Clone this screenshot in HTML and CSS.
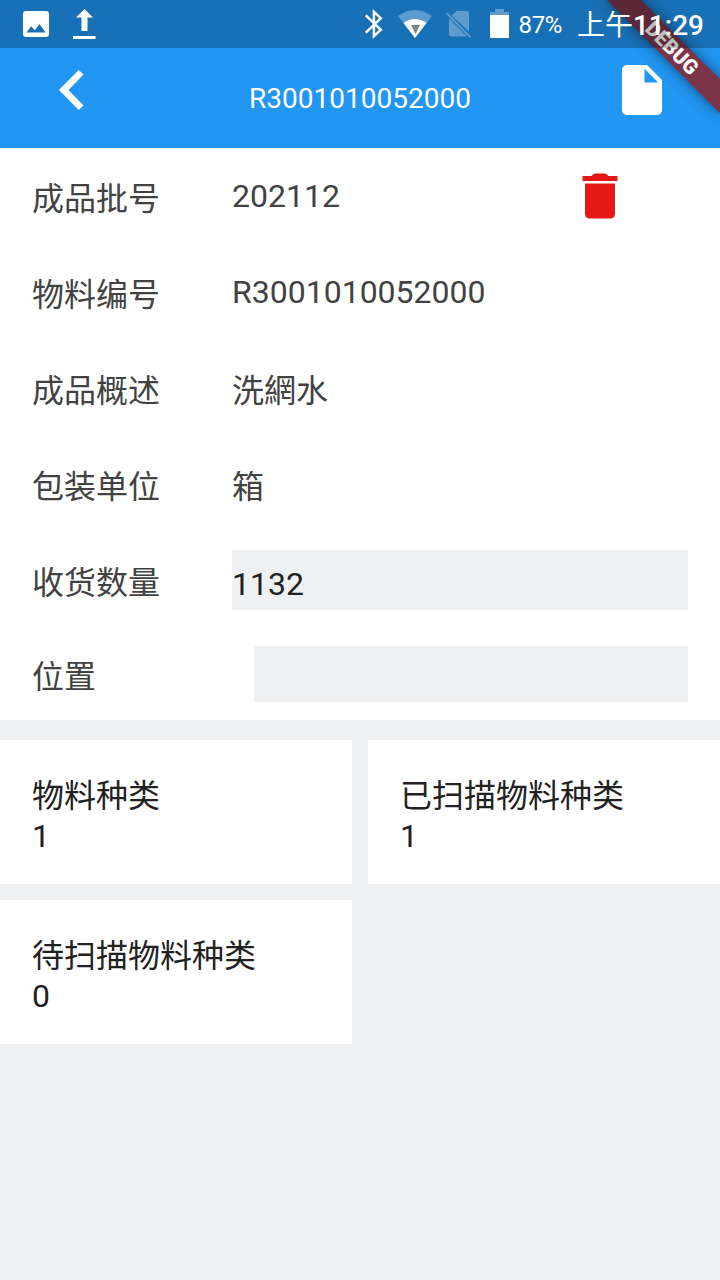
FILE: index.html
```html
<!DOCTYPE html>
<html lang="zh-CN">
<head>
    <meta charset="UTF-8">
    <meta name="viewport" content="width=device-width, initial-scale=1.0">
    <title>R3001010052000</title>
    <link rel="stylesheet" href="styles.css">
</head>
<body>
    <div class="screen">
        <div class="status-bar">
            <svg class="icon-image" width="26" height="26" viewBox="0 0 26 26">
                <path fill="#fff" fill-rule="evenodd" d="M3 0h20a3 3 0 0 1 3 3v20a3 3 0 0 1-3 3H3a3 3 0 0 1-3-3V3a3 3 0 0 1 3-3zM3.500 21.500h19L16.500 13l-4.700 6.200L8 15.300z"/>
            </svg>
            <svg class="icon-upload" width="24" height="32" viewBox="0 0 24 32">
                <path fill="#fff" d="M12.500 1l8.500 8.500H15.500V23h-6V9.500H4zM1 28h22.500v3H1z"/>
            </svg>
            <div class="status-right">
                <svg class="icon-bluetooth" width="20" height="30" viewBox="0 0 20 30">
                    <path fill="none" stroke="#fff" stroke-width="2.500" d="M1.800 6.300l15 14.500-6.900 6.300V2.900l6.900 6.300-15 14.500"/>
                </svg>
                <svg class="icon-wifi" width="36" height="30" viewBox="0 0 36 30">
                    <path fill="#5f9bcd" d="M1 7Q18-5 35 7L18 29z"/>
                    <path fill="#fff" d="M6.500 14Q18 6 29.500 14L18 29z"/>
                    <path fill="#858585" d="M14 16h9l-4.500 9z"/>
                </svg>
                <svg class="icon-sim" width="28" height="30" viewBox="0 0 28 30">
                    <path fill="#5f9bcd" d="M12 2h10q2 0 2 2v18.500L6.500 6.500zM4 9.500L22 27.500H6q-2 0-2-2z"/>
                    <path stroke="#5f9bcd" stroke-width="2" d="M1.500 4l24 24.500"/>
                </svg>
                <svg class="icon-battery" width="19" height="29" viewBox="0 0 19 29">
                    <path fill="#5f9bcd" d="M5 0h9v3h5v4H0V3h5z"/>
                    <path fill="#fff" d="M0 6h19v23H0z"/>
                </svg>
                <span class="battery-level">87%</span>
                <span class="clock"><span class="clock-period">上午</span>11:29</span>
            </div>
        </div>

        <div class="debug-banner">DEBUG</div>

        <header class="app-bar">
            <svg class="back-button" width="48" height="40" viewBox="0 0 48 40">
                <path fill="#fff" d="M19.700 0l4.800 4.600L9.500 20l15 15.400-4.800 4.600L0 20z"/>
            </svg>
            <h1 class="app-title">R3001010052000</h1>
            <svg class="file-button" width="60" height="60" viewBox="0 0 24 24">
                <path fill="#fff" d="M6 2c-1.100 0-2 .9-2 2v16c0 1.100.9 2 2 2h12c1.100 0 2-.9 2-2V8l-6-6H6zm7 7V3.500L18.500 9H13z"/>
            </svg>
        </header>

        <main>
            <section class="details">
                <div class="row">
                    <span class="label">成品批号</span>
                    <span class="value">202112</span>
                    <svg class="delete-button" width="36" height="46" viewBox="0 0 36 46">
                        <path fill="#e61717" d="M.5 3H9.500Q11 .5 13 .5h10Q25 .5 26.500 3h9v5H.5zM3 10.500h30V40.500q0 5-5 5H8q-5 0-5-5z"/>
                    </svg>
                </div>
                <div class="row">
                    <span class="label">物料编号</span>
                    <span class="value">R3001010052000</span>
                </div>
                <div class="row">
                    <span class="label">成品概述</span>
                    <span class="value value-cjk">洗網水</span>
                </div>
                <div class="row">
                    <span class="label">包装单位</span>
                    <span class="value value-cjk">箱</span>
                </div>
                <div class="row">
                    <span class="label">收货数量</span>
                    <input class="field" type="text" value="1132">
                </div>
                <div class="row row-location">
                    <span class="label">位置</span>
                    <input class="field field-location" type="text">
                </div>
            </section>

            <section class="stats">
                <div class="stat-card">
                    <div class="stat-name">物料种类</div>
                    <div class="stat-count">1</div>
                </div>
                <div class="stat-card">
                    <div class="stat-name">已扫描物料种类</div>
                    <div class="stat-count">1</div>
                </div>
                <div class="stat-card">
                    <div class="stat-name">待扫描物料种类</div>
                    <div class="stat-count">0</div>
                </div>
            </section>
        </main>
    </div>
</body>
</html>
```
FILE: styles.css
```css
:root {
    --color-primary: #2196f3;
    --color-background: #eff0f2;
    --color-label: #424242;
    --color-text: #212121;
    --color-banner: #7b3448;
}
* {
    box-sizing: border-box;
}
body {
    margin: 0;
    font-family: Roboto, "Noto Sans CJK SC", sans-serif;
    font-size: 32px;
    color: var(--color-text);
    background-color: var(--color-background);
}
svg {
    display: block;
    flex-shrink: 0;
}
.screen {
    position: relative;
    width: 720px;
    height: 1280px;
    overflow: hidden;
}

/* the status bar is translucent and sits over the app bar and the banner */
.status-bar {
    position: relative;
    z-index: 2;
    display: flex;
    align-items: center;
    height: 48px;
    padding: 0 16px 0 23px;
    background-color: rgba(0, 0, 0, 0.25);
    color: #fff;
}
.icon-upload {
    margin-left: 23px;
}
.status-right {
    display: flex;
    align-items: center;
    margin-left: auto;
}
.icon-wifi {
    margin-left: 13px;
}
.icon-sim {
    margin-left: 12px;
}
.icon-battery {
    margin: 0 0 1px 17px;
}
.battery-level {
    margin-left: 10px;
    font-size: 24px;
    line-height: 48px;
    padding-top: 2px;
    letter-spacing: -0.4px;
}
.clock {
    margin-left: 15px;
    padding-top: 3px;
    font-size: 28px;
    font-weight: 500;
    line-height: 45px;
}
.clock-period {
    font-weight: 400;
}

.debug-banner {
    position: absolute;
    top: 56px;
    left: 640px;
    z-index: 1;
    width: 160px;
    height: 24px;
    transform: rotate(45deg);
    transform-origin: 80px -56px;
    background-color: var(--color-banner);
    box-shadow: 0 0 14px rgba(0, 0, 0, 0.5);
    color: #fff;
    font-size: 20.4px;
    font-weight: 900;
    line-height: 24px;
    text-align: center;
}

.app-bar {
    display: flex;
    justify-content: space-between;
    height: 148px;
    margin-top: -48px;
    padding: 60px 48px 0 59px;
    background-color: var(--color-primary);
    color: #fff;
}
.back-button {
    margin-top: 10px;
}
.app-title {
    margin: 22px 0 0 1px;
    font-size: 28px;
    font-weight: 400;
    line-height: 33px;
}

.details {
    background-color: #fff;
    color: var(--color-label);
}
.row {
    display: flex;
    align-items: center;
    height: 96px;
    padding: 0 32px;
}
.row-location {
    height: 92px;
}
.label {
    width: 200px;
    padding-top: 6px;
    line-height: 48px;
}
.value {
    line-height: 48px;
}
.value-cjk {
    padding-top: 6px;
}
.delete-button {
    margin: 0 70px 0 auto;
}
.field {
    flex: 1;
    min-width: 0;
    height: 60px;
    padding: 8px 0 0;
    border: none;
    border-radius: 0;
    outline: none;
    background-color: var(--color-background);
    color: var(--color-text);
    font: inherit;
}
.field-location {
    height: 56px;
    margin-left: 22px;
}

.stats {
    display: grid;
    grid-template-columns: 1fr 1fr;
    gap: 16px;
    margin-top: 20px;
}
.stat-card {
    height: 144px;
    padding: 32px;
    background-color: #fff;
}
.stat-name {
    line-height: 48px;
}
.stat-count {
    margin-top: -2px;
    line-height: 37px;
}
```
